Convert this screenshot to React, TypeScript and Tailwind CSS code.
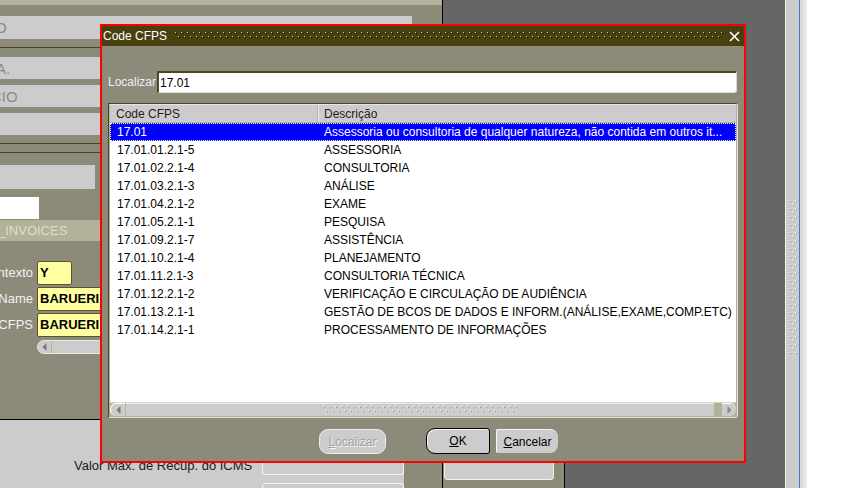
import React from "react";

const rows: [string, string][] = [
  ["17.01", "Assessoria ou consultoria de qualquer natureza, não contida em outros it..."],
  ["17.01.01.2.1-5", "ASSESSORIA"],
  ["17.01.02.2.1-4", "CONSULTORIA"],
  ["17.01.03.2.1-3", "ANÁLISE"],
  ["17.01.04.2.1-2", "EXAME"],
  ["17.01.05.2.1-1", "PESQUISA"],
  ["17.01.09.2.1-7", "ASSISTÊNCIA"],
  ["17.01.10.2.1-4", "PLANEJAMENTO"],
  ["17.01.11.2.1-3", "CONSULTORIA TÉCNICA"],
  ["17.01.12.2.1-2", "VERIFICAÇÃO E CIRCULAÇÃO DE AUDIÊNCIA"],
  ["17.01.13.2.1-1", "GESTÃO DE BCOS DE DADOS E INFORM.(ANÁLISE,EXAME,COMP.ETC)"],
  ["17.01.14.2.1-1", "PROCESSAMENTO DE INFORMAÇÕES"],
];

function Dots({
  w,
  h,
  light,
  dark,
  id,
  pw = 6,
  ph = 8,
}: {
  w: number;
  h: number;
  light: string;
  dark: string;
  id: string;
  pw?: number;
  ph?: number;
}) {
  const hx = Math.floor(pw / 2);
  const hy = Math.floor(ph / 2);
  return (
    <svg width={w} height={h} className="block shrink-0">
      <defs>
        <pattern id={id} width={pw} height={ph} patternUnits="userSpaceOnUse">
          <rect x="0" y="0" width="1" height="1" fill={light} />
          <rect x="1" y="1" width="1" height="1" fill={dark} />
          <rect x={hx} y={hy} width="1" height="1" fill={light} />
          <rect x={hx + 1} y={hy + 1} width="1" height="1" fill={dark} />
        </pattern>
      </defs>
      <rect width={w} height={h} fill={`url(#${id})`} />
    </svg>
  );
}

function Tri({ dir, color = "#777" }: { dir: "l" | "r"; color?: string }) {
  return (
    <svg width="5" height="8" className="block">
      {dir === "l" ? (
        <polygon points="4.5,0 4.5,8 0.5,4" fill={color} />
      ) : (
        <polygon points="0.5,0 0.5,8 4.5,4" fill={color} />
      )}
    </svg>
  );
}

function GreyField({ w, h, text, shift }: { w: string; h: string; text?: string; shift?: string }) {
  return (
    <div className={`${w} ${h} shrink-0 bg-[#cccccc] flex items-center overflow-hidden`}>
      {text ? <span className={`${shift} text-[15px] text-[#8a8a8a] leading-none whitespace-nowrap`}>{text}</span> : null}
    </div>
  );
}

export default function App() {
  return (
    <div className="relative w-[846px] h-[488px] overflow-hidden flex bg-[#666666] font-['Liberation_Sans',Arial,sans-serif] text-[12px]">
      {/* Left background form */}
      <div className="w-[443px] h-full shrink-0 border-r border-black bg-[#8c8a78] flex flex-col [&>*]:shrink-0">
        <div className="h-[5px] bg-[#b3b19a]" />
        <div className="h-[11px]" />
        <GreyField w="w-[412px]" h="h-[23px]" text="O" shift="-ml-[5px]" />
        <div className="h-[8px]" />
        <div className="h-px w-full bg-[#4a4422]" />
        <div className="h-[9px]" />
        <GreyField w="w-[412px]" h="h-[22px]" text="A." shift="-ml-[4px]" />
        <div className="h-[6px]" />
        <GreyField w="w-[412px]" h="h-[22px]" text="CIO" shift="-ml-[9px]" />
        <div className="h-[6px]" />
        <GreyField w="w-[412px]" h="h-[22px]" />
        <div className="h-[8px]" />
        <div className="h-px w-full bg-[#4a4422]" />
        <div className="h-[8px]" />
        <div className="h-px w-full bg-[#4a4422]" />
        <div className="h-[12px]" />
        <GreyField w="w-[95px]" h="h-[24px]" />
        <div className="h-[8px]" />
        <div className="w-[39px] h-[22px] bg-white" />
        <div className="h-px" />
        <div className="h-[21px] bg-[#b3b19a] flex items-center">
          <span className="text-[13px] text-[#dedcd0] leading-none -ml-[2px]">_INVOICES</span>
        </div>
        <div className="h-[20px]" />
        <div className="flex flex-col gap-[2px]">
          {[
            ["ntexto", "Y"],
            ["Name", "BARUERI"],
            ["CFPS", "BARUERI"],
          ].map(([l, v], i) => (
            <div key={i} className="flex items-center h-[24px]">
              <div className="w-[35px] text-right text-[13px] text-[#f2f2f2] pr-[2px] overflow-hidden whitespace-nowrap flex justify-end">
                <span>{l}</span>
              </div>
              <div
                className={`${i === 0 ? "w-[35px]" : "w-[100px]"} h-[24px] ml-[2px] bg-[#ffffa0] border border-[#5a5230] rounded-[2px] flex items-center pl-[2px] font-bold text-[13px] text-black`}
              >
                {v}
              </div>
            </div>
          ))}
        </div>
        <div className="h-[3px]" />
        <div className="ml-[37px] w-[80px] h-[14px] bg-[#cccccc] border border-[#e8e8e0] rounded-l-[7px] flex items-center">
          <div className="w-[14px] h-full flex items-center justify-center border-r border-[#b3b19a]">
            <Tri dir="l" />
          </div>
        </div>
        <div className="h-[65px]" />
        <div className="flex-1 border-t border-black flex">
          <div className="w-[404px] h-full bg-[#cccccc] relative flex">
            <div className="w-[74px]" />
            <div className="flex flex-col">
              <div className="h-[39px]" />
              <span className="text-[13px] text-[#1a1a1a] leading-none whitespace-nowrap">Valor Max. de Recup. do ICMS</span>
            </div>
            <div className="ml-auto flex flex-col gap-[8px] pt-[27px]">
              <div className="w-[142px] h-[28px] border border-[#f4f4f0] border-t-0 rounded-b-[3px] bg-[#cccccc]" />
              <div className="w-[142px] h-[28px] border border-[#f4f4f0] rounded-t-[3px] bg-[#cccccc]" />
            </div>
          </div>
          <div className="flex-1 bg-[#8c8a78]" />
        </div>
      </div>

      {/* Middle dark area */}
      <div className="w-[342px] h-full shrink-0 flex flex-col">
        <div className="flex-1" />
        <div className="w-[122px] h-[40px] shrink-0 bg-[#8c8a78] border-r border-black pl-px pt-[7px]">
          <div className="w-[110px] h-[25px] bg-[#cccccc] border border-[#efefe8] rounded-b-[3px]" />
        </div>
      </div>

      {/* Right strip */}
      <div className="flex-1 h-full flex">
        <div className="w-px h-full bg-[#f4f4f4]" />
        <div className="w-[13px] h-full bg-[#cccccc] flex flex-col items-center">
          <div className="h-[200px] shrink-0" />
          <Dots w={8} h={156} light="#ffffff" dark="#8a8a8a" id="grip" pw={6} ph={8} />
        </div>
        <div className="w-px h-full bg-[#3d7fc2]" />
        <div className="w-[7px] h-full bg-gradient-to-r from-[#d6d6d6] to-[#eeeeee]" />
        <div className="flex-1 h-full bg-white" />
      </div>

      {/* Dialog */}
      <div className="absolute left-[100px] top-[24px] w-[646px] h-[439px] border-2 border-[#ff0000] bg-[#8c8a78] flex flex-col">
        <div className="h-[20px] shrink-0 bg-[#4a3f0e] flex items-center pl-px text-white">
          <span className="leading-none whitespace-nowrap">Code CFPS</span>
          <div className="ml-[8px]">
            <Dots w={548} h={8} light="#d6cda0" dark="#15120a" id="title" />
          </div>
          <svg width="11" height="11" className="ml-[6px] block" viewBox="0 0 11 11">
            <path d="M1 1 L10 10 M10 1 L1 10" stroke="white" strokeWidth="1.6" />
          </svg>
        </div>

        <div className="pl-[6px] pr-[6px] pt-[25px] flex flex-col">
          <div className="flex items-center h-[22px] pr-px">
            <span className="w-[49px] text-[#eeeef6] leading-none whitespace-nowrap">Localizar</span>
            <div className="flex-1 h-[22px] bg-white border-t-2 border-l-2 border-t-[#4d4526] border-l-[#4d4526] border-r border-b border-r-[#dcdacb] border-b-[#dcdacb] rounded-tr-[2px] rounded-br-[3px] flex items-center pl-[1px] text-black">
              17.01
            </div>
          </div>

          <div className="mt-[10px] h-[315px] border border-t-[#4d4526] border-l-[#4d4526] border-r-[#e2e0d2] border-b-[#e2e0d2] rounded-tr-[3px] rounded-br-[3px]">
            <div className="w-full h-full border border-t-[#e8e6da] border-l-[#b3b19a] border-r-[#b3b19a] border-b-[#b3b19a] bg-white flex flex-col">
              <div className="h-[18px] bg-[#cccccc] border-b border-[#b3b19a] flex text-[#1e1e1e] shrink-0">
                <div className="w-[208px] border-r border-[#b3b19a] pl-[6px] flex items-center">Code CFPS</div>
                <div className="pl-[5px] flex items-center border-l border-[#f0f0f0]">Descrição</div>
              </div>
              {rows.map(([c, d], i) => (
                <div
                  key={i}
                  className={`h-[18px] flex items-center whitespace-nowrap shrink-0 ${
                    i === 0 ? "bg-[#0000ff] text-white border border-dotted border-[#ffffc8]" : "text-black border border-transparent"
                  }`}
                >
                  <div className="w-[207px] pl-[6px]">{c}</div>
                  <div className="pl-[6px]">{d}</div>
                </div>
              ))}
              <div className="flex-1" />
              <div className="h-[14px] shrink-0 flex bg-[#b3b19a] border-t border-[#d8d6c8]">
                <div className="w-[15px] h-full bg-[#cccccc] rounded-l-[6px] border-l border-t border-white flex items-center justify-center">
                  <Tri dir="l" />
                </div>
                <div className="w-px h-full bg-[#b3b19a]" />
                <div className="w-[588px] h-full bg-[#cccccc] border-t border-[#eeeeee] flex items-center justify-center">
                  <Dots w={194} h={8} light="#ffffff" dark="#8c8c8c" id="hgrip" />
                </div>
                <div className="flex-1" />
                <div className="w-[14px] h-full bg-[#cccccc] rounded-r-[6px] border-t border-white flex items-center justify-center">
                  <Tri dir="r" color="#8a8a8a" />
                </div>
              </div>
            </div>
          </div>

          <div className="mt-[10px] flex items-start pl-[211px]">
            <div className="mt-px w-[67px] h-[25px] rounded-[9px] bg-[#cccccc] border border-[#ececec] flex items-center justify-center text-[#a2a2a2] [text-shadow:1px_1px_0_#f4f4f4]">
              <span>
                <span className="underline">L</span>ocalizar
              </span>
            </div>
            <div className="ml-[40px] w-[64px] h-[26px] rounded-l-[9px] rounded-r-[3px] bg-[#cccccc] border border-black shadow-[inset_1px_1px_0_#f4f4f4] flex items-center justify-center text-black">
              <span>
                <span className="underline">O</span>K
              </span>
            </div>
            <div className="ml-[6px] mt-px w-[62px] h-[24px] rounded-r-[8px] rounded-l-[2px] bg-[#cccccc] border-t border-l border-[#f4f4f4] flex items-center justify-center text-black">
              <span>
                <span className="underline">C</span>ancelar
              </span>
            </div>
          </div>
        </div>
      </div>
    </div>
  );
}
